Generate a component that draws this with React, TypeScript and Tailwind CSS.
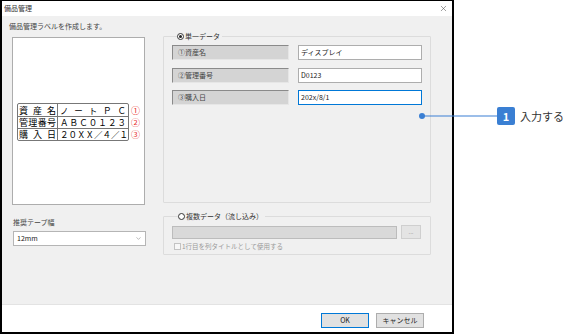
import { ChevronDown, X } from "lucide-react";

const jp = { fontFamily: '"Noto Sans CJK JP", "Noto Sans", sans-serif' };

const fieldRows = [
  { label: "①資産名", value: "ディスプレイ", focused: false },
  { label: "②管理番号", value: "D0123", focused: false },
  { label: "③購入日", value: "202x/8/1", focused: true },
];

const previewRows = [
  { head: ["資", "産", "名"], body: ["ノ", "ー", "ト", "Ｐ", "Ｃ"], mark: "①" },
  { head: ["管", "理", "番", "号"], body: ["Ａ", "Ｂ", "Ｃ", "０", "１", "２", "３"], mark: "②" },
  { head: ["購", "入", "日"], body: ["２", "０", "Ｘ", "Ｘ", "／", "４", "／", "１"], mark: "③" },
];

const Radio = ({ checked }: { checked: boolean }) => (
  <span className="flex h-[7px] w-[7px] items-center justify-center rounded-full border border-[#333] bg-white">
    {checked && <span className="h-[3px] w-[3px] rounded-full bg-[#222]" />}
  </span>
);

const LabelPreview = () => (
  <div className="flex flex-col pl-[4px] pt-[65px]">
    <div className="flex items-start">
      <div className="overflow-hidden rounded-[2px] border border-[#777] bg-white">
        {previewRows.map((row, i) => (
          <div key={i} className={`flex h-[12px] ${i > 0 ? "border-t border-[#777]" : ""}`}>
            <div className="flex w-[40px] items-center justify-between overflow-hidden border-r border-[#777] px-[1px] text-[9px] leading-none text-black">
              {row.head.map((c, j) => (
                <span key={j}>{c}</span>
              ))}
            </div>
            <div className="flex w-[70px] items-center justify-between overflow-hidden px-[2px] text-[8.5px] leading-none text-black">
              {row.body.map((c, j) => (
                <span key={j}>{c}</span>
              ))}
            </div>
          </div>
        ))}
      </div>
      <div className="ml-[2px] flex flex-col pt-[1px]">
        {previewRows.map((row, i) => (
          <span key={i} className="flex h-[12px] items-center text-[9px] leading-none text-[#e8312f]">
            {row.mark}
          </span>
        ))}
      </div>
    </div>
  </div>
);

export default function App() {
  return (
    <div className="relative h-[334px] w-[565px] bg-white" style={jp}>
      <div className="flex h-[334px] w-[454px] flex-col border-2 border-t border-black bg-[#f0f0f0]">
        {/* title bar */}
        <div className="flex h-[15px] items-center justify-between bg-white pl-[2px] pr-[4px]">
          <span className="text-[7px] leading-none text-[#333]">備品管理</span>
          <X className="h-[9px] w-[9px] text-[#555]" strokeWidth={1.5} />
        </div>

        {/* body */}
        <div className="flex h-[288px]">
          <div className="flex w-[151px] flex-col pl-[7px]">
            <span className="mt-[5px] h-[10px] text-[7px] leading-[10px] text-[#444]">
              備品管理ラベルを作成します。
            </span>
            <div className="ml-[3px] mt-[6px] h-[168px] w-[133px] border border-[#adadad] bg-white">
              <LabelPreview />
            </div>
            <span className="ml-[4px] mt-[12px] h-[10px] text-[7px] leading-[10px] text-[#444]">
              推奨テープ幅
            </span>
            <div className="ml-[4px] mt-[4px] flex h-[15px] w-[133px] items-center justify-between border border-[#b5b5b5] bg-white pl-[3px] pr-[3px]">
              <span className="text-[7px] leading-none text-[#222]">12mm</span>
              <ChevronDown className="h-[7px] w-[7px] text-[#666]" strokeWidth={1.5} />
            </div>
          </div>

          <div className="ml-[10px] flex w-[268px] flex-col pt-[15px]">
            <fieldset className="h-[172px] rounded-[1px] border border-[#dcdcdc] pl-[8px] pt-[4px]">
              <legend className="ml-[5px] flex h-[10px] items-center gap-[1px] pr-[2px]">
                <Radio checked />
                <span className="text-[7px] leading-none text-[#333]">単一データ</span>
              </legend>
              <div className="flex flex-col gap-[7.5px]">
                {fieldRows.map((row) => (
                  <div key={row.label} className="flex gap-[9px]">
                    <div className="flex h-[15px] w-[117px] items-center border border-b-[#e6e6e6] border-l-[#8a8a8a] border-r-[#e6e6e6] border-t-[#8a8a8a] bg-[#d4d4d4] pl-[5px]">
                      <span className="text-[7px] leading-none text-[#444]">{row.label}</span>
                    </div>
                    <div
                      className={`flex h-[15px] w-[124px] items-center border bg-white pl-[2px] ${
                        row.focused ? "border-[#0078d7]" : "border-[#adadad]"
                      }`}
                    >
                      <span className="text-[7px] leading-none text-[#222]">{row.value}</span>
                    </div>
                  </div>
                ))}
              </div>
            </fieldset>

            <fieldset className="mt-[8px] h-[44px] rounded-[1px] border border-[#dcdcdc] pl-[8px] pt-[4px]">
              <legend className="ml-[6px] flex h-[10px] items-center gap-[1px] pr-[2px]">
                <Radio checked={false} />
                <span className="text-[7px] leading-none text-[#333]">複数データ（流し込み）</span>
              </legend>
              <div className="flex items-center gap-[4px]">
                <div className="h-[13px] w-[225px] border border-[#bcbcbc] bg-[#d9d9d9]" />
                <div className="flex h-[14px] w-[20px] items-center justify-center border border-[#cfcfcf] bg-[#e4e4e4]">
                  <span className="text-[6px] leading-none text-[#999]">...</span>
                </div>
              </div>
              <div className="mt-[4px] flex items-center gap-[1px] pl-[2px]">
                <span className="h-[7px] w-[7px] border border-[#c3c3c3] bg-[#f7f7f7]" />
                <span className="text-[6.5px] leading-none text-[#9a9a9a]">1行目を列タイトルとして使用する</span>
              </div>
            </fieldset>
          </div>
        </div>

        {/* footer */}
        <div className="flex flex-1 justify-end gap-[7px] border-t border-[#e3e3e3] bg-white pr-[28px] pt-[8px]">
          <button className="flex h-[15px] w-[48px] items-center justify-center border border-[#0078d7] bg-[#e1e1e1] text-[7px] leading-none text-[#222]">
            OK
          </button>
          <button className="flex h-[15px] w-[48px] items-center justify-center border border-[#adadad] bg-[#e1e1e1] text-[7px] leading-none text-[#222]">
            キャンセル
          </button>
        </div>
      </div>

      {/* callout */}
      <div className="absolute left-[419px] top-[107px] flex items-center">
        <svg width="78" height="18" viewBox="0 0 78 18">
          <circle cx="3" cy="9" r="3" fill="#3a7fd3" />
          <line x1="3" y1="9" x2="78" y2="9" stroke="#3a7fd3" strokeWidth="1.2" />
        </svg>
        <div className="flex h-[18px] w-[18px] items-center justify-center rounded-[2px] bg-[#3a7fd3] text-[11px] font-bold leading-none text-white">
          1
        </div>
        <span className="ml-[5px] text-[11px] leading-none text-[#333]">入力する</span>
      </div>
    </div>
  );
}
